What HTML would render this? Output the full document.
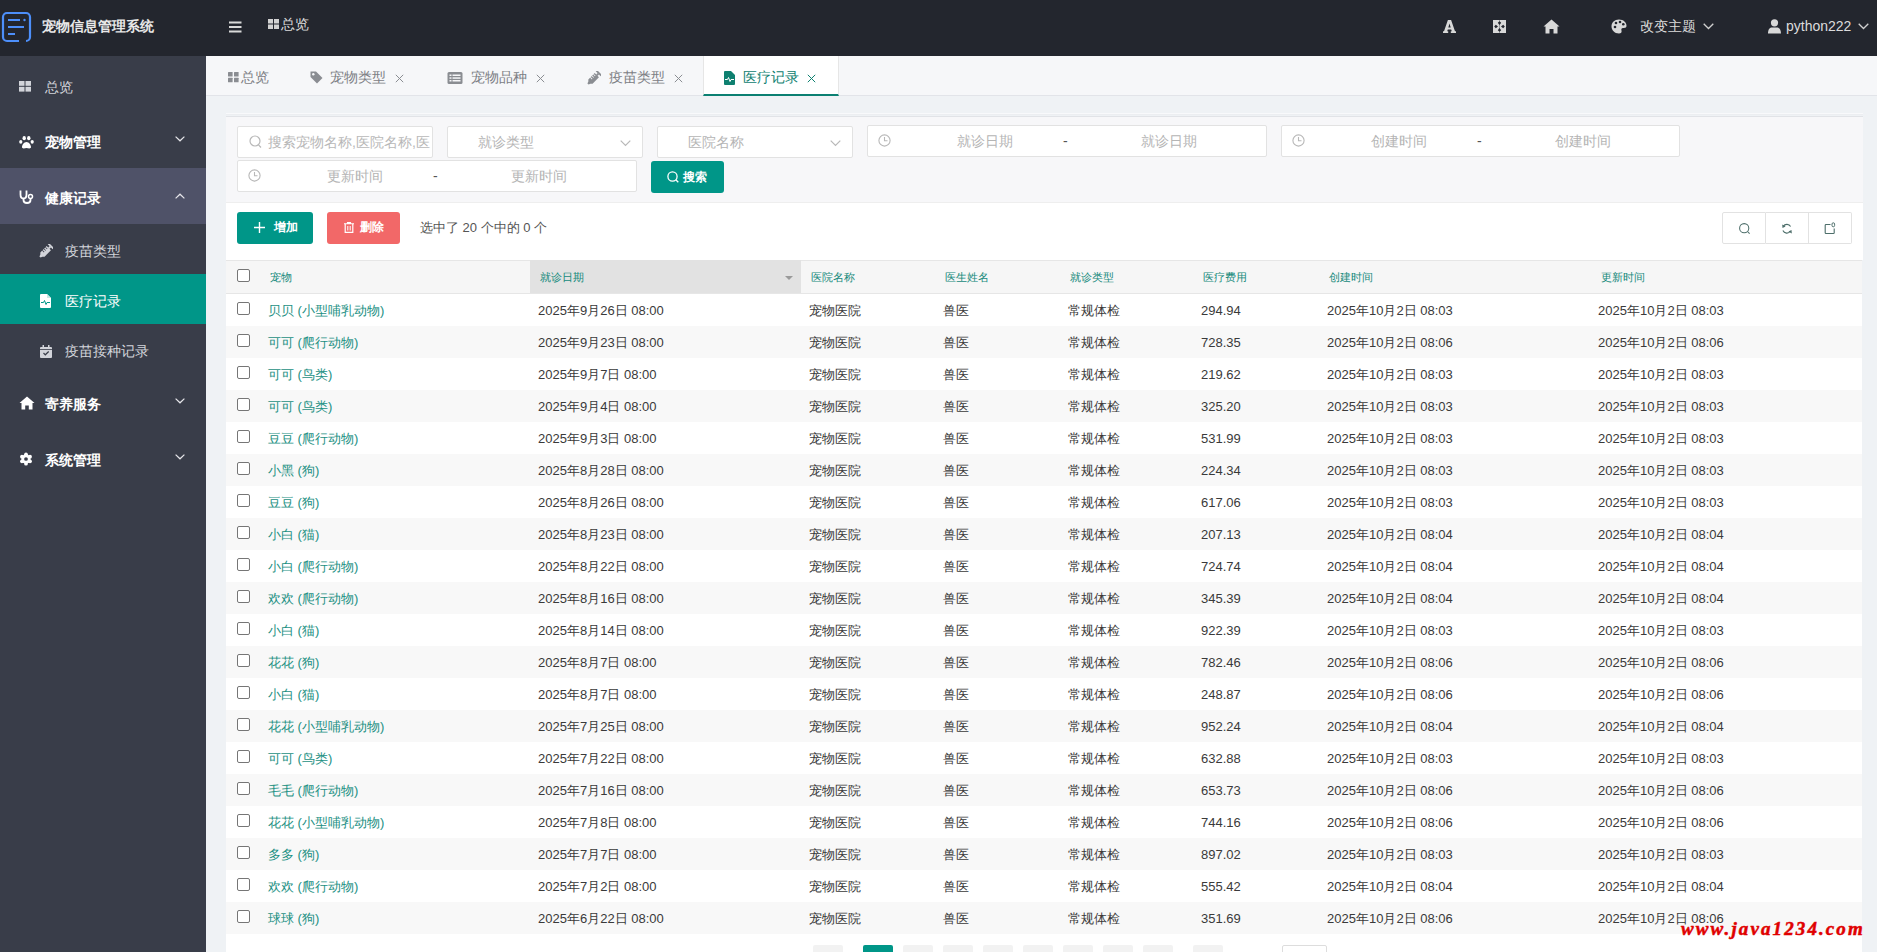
<!DOCTYPE html>
<html><head><meta charset="utf-8">
<style>
*{box-sizing:border-box;margin:0;padding:0}
html,body{width:1877px;height:952px;overflow:hidden}
body{font-family:"Liberation Sans",sans-serif;background:#eff2f5;position:relative;color:#333}
.abs{position:absolute}
svg{display:block}
#hdr{position:absolute;left:0;top:0;width:1877px;height:56px;background:#23262e}
#side{position:absolute;left:0;top:56px;width:206px;height:896px;background:#393d49}
.mi{position:absolute;left:0;width:206px;color:#fff;font-size:14px;font-weight:bold}
.mi .t{position:absolute;left:45px}
.mi .ic{position:absolute}
.sub{position:absolute;left:0;width:206px;height:50px;color:#d2d4da;font-size:14px}
.sub .t{position:absolute;left:65px;top:19px}
#tabs{position:absolute;left:206px;top:56px;width:1671px;height:40px;background:#f6f7f9;border-bottom:1px solid #e2e4e9}
.tab{position:absolute;top:0;height:39px;color:#7d8085;font-size:14px}
.tab .t{position:absolute;top:13px}
#panel{position:absolute;left:226px;top:116px;width:1637px;height:86px;background:#f7f7f9;border-top:1px solid #e1e3e7}
.inp{position:absolute;height:32px;background:#fff;border:1px solid #e2e2e2;border-radius:2px;color:#b5b5b5;font-size:14px}
.inp .t{position:absolute;top:7px}
#tool{position:absolute;left:226px;top:202px;width:1637px;height:58px;background:#fff;border-top:1px solid #eee}
#thead{position:absolute;left:226px;top:260px;width:1636px;height:34px;background:#f6f6f6;border-top:1px solid #e6e6e6;border-bottom:1px solid #e6e6e6}
.th{position:absolute;top:9px;font-size:11px;color:#168a7c}
.tr{position:absolute;left:226px;width:1636px;height:32px}
.td{position:absolute;top:8px;font-size:13px;line-height:17px;color:#3a3a3a;white-space:nowrap}
.pet{color:#1c9083}
.cb{position:absolute;width:13px;height:13px;border:1px solid #767676;border-radius:2px;background:#fff}
.btn{position:absolute;height:32px;border-radius:3px;color:#fff;font-size:12px;font-weight:bold}
.tb{position:absolute;top:10px;width:43px;height:32px;border:1px solid #e2e2e2;background:#fff}
.pg{position:absolute;top:945px;width:30px;height:10px;background:#f2f2f2;border-radius:2px}
</style></head><body>

<!-- HEADER -->
<div id="hdr">
  <svg class="abs" style="left:1px;top:11px" width="31" height="32" viewBox="0 0 31 32">
    <rect x="2" y="2" width="27" height="28" rx="4" fill="none" stroke="#4d8ffa" stroke-width="2.2"/>
    <rect x="7" y="8" width="12" height="2" fill="#4d8ffa"/>
    <circle cx="23.5" cy="9" r="1.2" fill="#4d8ffa"/>
    <rect x="7" y="15" width="16" height="2" fill="#4d8ffa"/>
    <rect x="7" y="22" width="7" height="2" fill="#4d8ffa"/>
    <rect x="18" y="28" width="7" height="4" fill="#23262e"/>
  </svg>
  <div class="abs" style="left:42px;top:18px;font-size:14px;font-weight:bold;color:#e8e8e8">宠物信息管理系统</div>
  <svg class="abs" style="left:229px;top:21px" width="13" height="12" viewBox="0 0 13 12">
    <rect x="0" y="0.5" width="12.5" height="2" fill="#d9d9d9"/><rect x="0" y="5" width="12.5" height="2" fill="#d9d9d9"/><rect x="0" y="9.5" width="12.5" height="2" fill="#d9d9d9"/>
  </svg>
  <svg class="abs" style="left:268px;top:19px" width="12" height="11" viewBox="0 0 12 11">
    <rect x="0" y="0" width="5" height="4.5" fill="#d2d2d2"/><rect x="6" y="0" width="5" height="4.5" fill="#d2d2d2"/>
    <rect x="0" y="5.5" width="5" height="4.5" fill="#d2d2d2"/><rect x="6" y="5.5" width="5" height="4.5" fill="#d2d2d2"/>
  </svg>
  <div class="abs" style="left:281px;top:16px;font-size:14px;color:#dcdcdc">总览</div>

  <svg class="abs" style="left:1443px;top:20px" width="13" height="13" viewBox="0 0 13 13"><path fill-rule="evenodd" d="M0 13 V11.3 H1 L4.9 0 H8.1 L12 11.3 H13 V13 H7.8 V11.3 H8.8 L8.2 9.4 H4.8 L4.2 11.3 H5.2 V13 Z M5.3 7.4 H7.7 L6.5 3.6 Z" fill="#d8d8d8"/></svg>
  <svg class="abs" style="left:1493px;top:20px" width="13" height="13" viewBox="0 0 13 13">
    <rect x="0" y="0" width="13" height="13" fill="#d8d8d8"/>
    <path d="M6.5 5 L8.2 2.8 L6.5 1.2 L4.8 2.8 Z M6.5 8 L8.2 10.2 L6.5 11.8 L4.8 10.2 Z M5 6.5 L2.8 8.2 L1.2 6.5 L2.8 4.8 Z M8 6.5 L10.2 8.2 L11.8 6.5 L10.2 4.8 Z" fill="#23262e"/>
    <path d="M6.5 0 V13" stroke="#23262e" stroke-width="0.35"/>
  </svg>
  <svg class="abs" style="left:1543px;top:19px" width="17" height="15" viewBox="0 0 17 15">
    <path d="M8.5 0.5 L16.5 7.5 L14.5 7.5 L14.5 14.5 L10.5 14.5 L10.5 10 L6.5 10 L6.5 14.5 L2.5 14.5 L2.5 7.5 L0.5 7.5 Z" fill="#d8d8d8"/>
  </svg>
  <svg class="abs" style="left:1611px;top:19px" width="16" height="15" viewBox="0 0 16 15">
    <path d="M8 0.5 C12.5 0.5 15.5 3.5 15.5 6.8 C15.5 9 13.5 9 12 9 C10.5 9 10 10 10.5 11.5 C11 13.5 10 14.5 8 14.5 C3.5 14.5 0.5 11 0.5 7.5 C0.5 3.5 3.5 0.5 8 0.5 Z" fill="#d8d8d8"/>
    <circle cx="4" cy="8" r="1.3" fill="#23262e"/><circle cx="5" cy="4" r="1.3" fill="#23262e"/><circle cx="9" cy="3" r="1.3" fill="#23262e"/><circle cx="12.3" cy="5.2" r="1.3" fill="#23262e"/>
  </svg>
  <div class="abs" style="left:1640px;top:18px;font-size:14px;color:#dcdcdc">改变主题</div>
  <svg class="abs" style="left:1703px;top:23px" width="11" height="7" viewBox="0 0 11 7"><path d="M0.7 0.7 L5.5 5.5 L10.3 0.7" fill="none" stroke="#d0d0d0" stroke-width="1.3"/></svg>
  <svg class="abs" style="left:1768px;top:19px" width="13" height="15" viewBox="0 0 13 15">
    <circle cx="6.5" cy="3.8" r="3.6" fill="#d8d8d8"/>
    <path d="M0 14.5 C0 10 2 8.5 4 8.5 L9 8.5 C11 8.5 13 10 13 14.5 Z" fill="#d8d8d8"/>
  </svg>
  <div class="abs" style="left:1786px;top:18px;font-size:14px;color:#dcdcdc">python222</div>
  <svg class="abs" style="left:1858px;top:23px" width="11" height="7" viewBox="0 0 11 7"><path d="M0.7 0.7 L5.5 5.5 L10.3 0.7" fill="none" stroke="#d0d0d0" stroke-width="1.3"/></svg>
</div>

<!-- SIDEBAR -->
<div id="side">
  <div class="mi" style="top:0;height:56px;font-weight:normal;color:#d2d4da">
    <svg class="ic" style="left:19px;top:25px" width="13" height="11" viewBox="0 0 13 11">
      <rect x="0" y="0" width="5.5" height="4.8" fill="#d2d4da"/><rect x="6.5" y="0" width="5.5" height="4.8" fill="#d2d4da"/>
      <rect x="0" y="5.8" width="5.5" height="4.8" fill="#d2d4da"/><rect x="6.5" y="5.8" width="5.5" height="4.8" fill="#d2d4da"/>
    </svg>
    <span class="t" style="top:23px">总览</span>
  </div>
  <div class="mi" style="top:56px;height:56px">
    <svg class="ic" style="left:19px;top:24px" width="15" height="13" viewBox="0 0 15 13">
      <ellipse cx="5.2" cy="2.2" rx="1.7" ry="2.1" fill="#fff"/><ellipse cx="9.8" cy="2.2" rx="1.7" ry="2.1" fill="#fff"/>
      <ellipse cx="1.8" cy="5.8" rx="1.6" ry="1.9" fill="#fff"/><ellipse cx="13.2" cy="5.8" rx="1.6" ry="1.9" fill="#fff"/>
      <path d="M7.5 6 C5 6 3 9 3 11 C3 12.8 5 12.5 7.5 12 C10 12.5 12 12.8 12 11 C12 9 10 6 7.5 6 Z" fill="#fff"/>
    </svg>
    <span class="t" style="top:22px">宠物管理</span>
    <svg class="ic" style="left:175px;top:23.5px" width="10" height="6" viewBox="0 0 10 6"><path d="M0.6 0.6 L5 4.8 L9.4 0.6" fill="none" stroke="#e6e6ea" stroke-width="1.2"/></svg>
  </div>
  <div class="mi" style="top:112px;height:56px;background:#4f5268">
    <svg class="ic" style="left:19px;top:22px" width="15" height="14" viewBox="0 0 15 14">
      <path d="M1.5 0.5 V4.5 C1.5 7 3 8.5 4.5 8.5 C6 8.5 7.5 7 7.5 4.5 V0.5" fill="none" stroke="#fff" stroke-width="1.8"/>
      <path d="M4.5 8.5 V10 C4.5 12 6 13 8 13 C10 13 11.5 12 11.5 10 V8" fill="none" stroke="#fff" stroke-width="1.8"/>
      <circle cx="11.5" cy="6.5" r="2" fill="none" stroke="#fff" stroke-width="1.5"/>
    </svg>
    <span class="t" style="top:22px">健康记录</span>
    <svg class="ic" style="left:175px;top:25px" width="10" height="6" viewBox="0 0 10 6"><path d="M0.6 5.4 L5 1.2 L9.4 5.4" fill="none" stroke="#e6e6ea" stroke-width="1.2"/></svg>
  </div>
  <div class="sub" style="top:168px">
    <svg class="abs" style="left:39px;top:20px" width="14" height="14" viewBox="0 0 14 14">
    <g transform="translate(7,7) rotate(-45)">
      <path d="M-5 -3 L4 -3 L4 3 L-5 3 L-6.5 1.5 L-8.5 0.8 L-8.5 -0.8 L-6.5 -1.5 Z" fill="#d2d4da"/>
      <rect x="4" y="-1" width="2.2" height="2" fill="#d2d4da"/>
      <rect x="6" y="-3.5" width="1.8" height="7" fill="#d2d4da"/>
      <rect x="-2.5" y="-3.1" width="0.8" height="2.6" fill="#393d49"/><rect x="-0.3" y="-3.1" width="0.8" height="2.6" fill="#393d49"/><rect x="1.9" y="-3.1" width="0.8" height="2.6" fill="#393d49"/>
    </g>
    </svg>
    <span class="t">疫苗类型</span>
  </div>
  <div class="sub" style="top:218px;background:#009688;color:#fff">
    <svg class="abs" style="left:40px;top:20px" width="11" height="14" viewBox="0 0 11 14">
      <path d="M0 1 Q0 0 1 0 L7 0 L11 4 L11 13 Q11 14 10 14 L1 14 Q0 14 0 13 Z" fill="#fff"/>
      <path d="M7 0 L7 4 L11 4" fill="#c8e8e4"/>
      <path d="M1 8.5 L3.5 8.5 L4.5 6.5 L6 10.5 L7 8.5 L10 8.5" fill="none" stroke="#009688" stroke-width="1"/>
    </svg>
    <span class="t">医疗记录</span>
  </div>
  <div class="sub" style="top:268px">
    <svg class="abs" style="left:40px;top:21px" width="12" height="13" viewBox="0 0 12 13">
      <rect x="0" y="2" width="12" height="11" rx="1" fill="#d2d4da"/>
      <rect x="2.5" y="0" width="1.5" height="3" fill="#d2d4da"/><rect x="8" y="0" width="1.5" height="3" fill="#d2d4da"/>
      <rect x="0" y="4" width="12" height="0.8" fill="#393d49"/>
      <path d="M3.5 8 L5.3 9.8 L8.7 6.5" fill="none" stroke="#393d49" stroke-width="1.2"/>
    </svg>
    <span class="t">疫苗接种记录</span>
  </div>
  <div class="mi" style="top:318px;height:56px">
    <svg class="ic" style="left:19px;top:22px" width="16" height="14" viewBox="0 0 16 14">
      <path d="M8 0.5 L15.5 7 L13.5 7 L13.5 13.5 L9.8 13.5 L9.8 9.5 L6.2 9.5 L6.2 13.5 L2.5 13.5 L2.5 7 L0.5 7 Z" fill="#fff"/>
    </svg>
    <span class="t" style="top:22px">寄养服务</span>
    <svg class="ic" style="left:175px;top:23.5px" width="10" height="6" viewBox="0 0 10 6"><path d="M0.6 0.6 L5 4.8 L9.4 0.6" fill="none" stroke="#e6e6ea" stroke-width="1.2"/></svg>
  </div>
  <div class="mi" style="top:374px;height:56px">
    <svg class="ic" style="left:19px;top:22px" width="14" height="14" viewBox="-0.5 -0.5 15 15">
      <circle cx="7" cy="7" r="5" fill="#fff"/><circle cx="7.00" cy="2.00" r="2" fill="#fff"/><circle cx="11.33" cy="4.50" r="2" fill="#fff"/><circle cx="11.33" cy="9.50" r="2" fill="#fff"/><circle cx="7.00" cy="12.00" r="2" fill="#fff"/><circle cx="2.67" cy="9.50" r="2" fill="#fff"/><circle cx="2.67" cy="4.50" r="2" fill="#fff"/><circle cx="7" cy="7" r="2" fill="#393d49"/>
    </svg>
    <span class="t" style="top:22px">系统管理</span>
    <svg class="ic" style="left:175px;top:23.5px" width="10" height="6" viewBox="0 0 10 6"><path d="M0.6 0.6 L5 4.8 L9.4 0.6" fill="none" stroke="#e6e6ea" stroke-width="1.2"/></svg>
  </div>
</div>

<!-- TABS -->
<div id="tabs">
  <div class="tab" style="left:0;width:80px">
    <svg class="abs" style="left:22px;top:16px" width="12" height="11" viewBox="0 0 12 11">
      <rect x="0" y="0" width="4.6" height="4.4" rx="0.5" fill="#8a8d92"/><rect x="6" y="0" width="4.6" height="4.4" rx="0.5" fill="#8a8d92"/>
      <rect x="0" y="5.8" width="4.6" height="4.4" rx="0.5" fill="#8a8d92"/><rect x="6" y="5.8" width="4.6" height="4.4" rx="0.5" fill="#8a8d92"/>
    </svg>
    <span class="t" style="left:35px">总览</span>
  </div>
  <div class="tab" style="left:83px;width:140px">
    <svg class="abs" style="left:21px;top:15px" width="13" height="13" viewBox="0 0 13 13">
      <path d="M0.5 0.5 L6 0.5 L12.5 7 L7 12.5 L0.5 6 Z" fill="#8a8d92"/><circle cx="3.3" cy="3.3" r="1.2" fill="#f6f7f9"/>
    </svg>
    <span class="t" style="left:41px">宠物类型</span>
    <svg class="abs" style="left:106px;top:18px" width="9" height="9" viewBox="0 0 9 9"><path d="M0.8 0.8 L8.2 8.2 M8.2 0.8 L0.8 8.2" stroke="#8a8d92" stroke-width="1"/></svg>
  </div>
  <div class="tab" style="left:223px;width:140px">
    <svg class="abs" style="left:18px;top:16px" width="16" height="12" viewBox="0 0 15 12">
      <rect x="0" y="0" width="15" height="12" rx="1.5" fill="#8a8d92"/>
      <rect x="2" y="2.5" width="2" height="1.5" fill="#f6f7f9"/><rect x="5" y="2.5" width="8" height="1.5" fill="#f6f7f9"/>
      <rect x="2" y="5.3" width="2" height="1.5" fill="#f6f7f9"/><rect x="5" y="5.3" width="8" height="1.5" fill="#f6f7f9"/>
      <rect x="2" y="8" width="2" height="1.5" fill="#f6f7f9"/><rect x="5" y="8" width="8" height="1.5" fill="#f6f7f9"/>
    </svg>
    <span class="t" style="left:42px">宠物品种</span>
    <svg class="abs" style="left:107px;top:18px" width="9" height="9" viewBox="0 0 9 9"><path d="M0.8 0.8 L8.2 8.2 M8.2 0.8 L0.8 8.2" stroke="#8a8d92" stroke-width="1"/></svg>
  </div>
  <div class="tab" style="left:363px;width:134px">
    <svg class="abs" style="left:18px;top:15px" width="14" height="14" viewBox="0 0 14 14">
    <g transform="translate(7,7) rotate(-45)">
      <path d="M-5 -3 L4 -3 L4 3 L-5 3 L-6.5 1.5 L-8.5 0.8 L-8.5 -0.8 L-6.5 -1.5 Z" fill="#8a8d92"/>
      <rect x="4" y="-1" width="2.2" height="2" fill="#8a8d92"/>
      <rect x="6" y="-3.5" width="1.8" height="7" fill="#8a8d92"/>
      <rect x="-2.5" y="-3.1" width="0.8" height="2.6" fill="#f6f7f9"/><rect x="-0.3" y="-3.1" width="0.8" height="2.6" fill="#f6f7f9"/><rect x="1.9" y="-3.1" width="0.8" height="2.6" fill="#f6f7f9"/>
    </g>
    </svg>
    <span class="t" style="left:40px">疫苗类型</span>
    <svg class="abs" style="left:105px;top:18px" width="9" height="9" viewBox="0 0 9 9"><path d="M0.8 0.8 L8.2 8.2 M8.2 0.8 L0.8 8.2" stroke="#8a8d92" stroke-width="1"/></svg>
  </div>
  <div class="tab" style="left:497px;width:136px;background:#fff;height:40px;border-bottom:2px solid #0b8072;border-left:1px solid #e6e6e6;border-right:1px solid #e6e6e6;color:#0e8070">
    <svg class="abs" style="left:20px;top:15px" width="11" height="14" viewBox="0 0 11 14">
      <path d="M0 1 Q0 0 1 0 L7 0 L11 4 L11 13 Q11 14 10 14 L1 14 Q0 14 0 13 Z" fill="#0e8070"/>
      <path d="M1 8.5 L3.5 8.5 L4.5 6.5 L6 10.5 L7 8.5 L10 8.5" fill="none" stroke="#fff" stroke-width="1"/>
    </svg>
    <span class="t" style="left:39px">医疗记录</span>
    <svg class="abs" style="left:103px;top:18px" width="9" height="9" viewBox="0 0 9 9"><path d="M0.8 0.8 L8.2 8.2 M8.2 0.8 L0.8 8.2" stroke="#0e8070" stroke-width="1"/></svg>
  </div>
</div>

<!-- SEARCH PANEL -->
<div class="abs" style="left:226px;top:113px;width:1637px;height:1px;background:#f8f9fb"></div><div class="abs" style="left:226px;top:114px;width:1637px;height:1px;background:#eceef1"></div>
<div id="panel"></div>
<div class="inp" style="left:237px;top:126px;width:196px">
  <svg class="abs" style="left:11px;top:8px" width="13" height="14" viewBox="0 0 13 14"><circle cx="6" cy="6" r="5" fill="none" stroke="#b8b8b8" stroke-width="1.2"/><path d="M9.5 9.8 L12 12.5" stroke="#b8b8b8" stroke-width="1.2"/></svg>
  <span class="t" style="left:30px;color:#b8b8b8;white-space:nowrap;overflow:hidden;width:164px">搜索宠物名称,医院名称,医</span>
</div>
<div class="inp" style="left:447px;top:126px;width:196px">
  <span class="t" style="left:30px">就诊类型</span>
  <svg class="abs" style="left:172px;top:13px" width="11" height="7" viewBox="0 0 11 7"><path d="M0.7 0.7 L5.5 5.5 L10.3 0.7" fill="none" stroke="#b8b8b8" stroke-width="1.2"/></svg>
</div>
<div class="inp" style="left:657px;top:126px;width:196px">
  <span class="t" style="left:30px">医院名称</span>
  <svg class="abs" style="left:172px;top:13px" width="11" height="7" viewBox="0 0 11 7"><path d="M0.7 0.7 L5.5 5.5 L10.3 0.7" fill="none" stroke="#b8b8b8" stroke-width="1.2"/></svg>
</div>
<div class="inp" style="left:867px;top:125px;width:400px">
  <svg class="abs" style="left:10px;top:8px" width="13" height="13" viewBox="0 0 13 13"><circle cx="6.5" cy="6.5" r="5.6" fill="none" stroke="#b8b8b8" stroke-width="1.1"/><path d="M6.5 3 V6.8 H9.5" fill="none" stroke="#b8b8b8" stroke-width="1.1"/></svg>
  <span class="t" style="left:89px">就诊日期</span>
  <span class="t" style="left:195px;color:#555">-</span>
  <span class="t" style="left:273px">就诊日期</span>
</div>
<div class="inp" style="left:1281px;top:125px;width:399px">
  <svg class="abs" style="left:10px;top:8px" width="13" height="13" viewBox="0 0 13 13"><circle cx="6.5" cy="6.5" r="5.6" fill="none" stroke="#b8b8b8" stroke-width="1.1"/><path d="M6.5 3 V6.8 H9.5" fill="none" stroke="#b8b8b8" stroke-width="1.1"/></svg>
  <span class="t" style="left:89px">创建时间</span>
  <span class="t" style="left:195px;color:#555">-</span>
  <span class="t" style="left:273px">创建时间</span>
</div>
<div class="inp" style="left:237px;top:160px;width:400px">
  <svg class="abs" style="left:10px;top:8px" width="13" height="13" viewBox="0 0 13 13"><circle cx="6.5" cy="6.5" r="5.6" fill="none" stroke="#b8b8b8" stroke-width="1.1"/><path d="M6.5 3 V6.8 H9.5" fill="none" stroke="#b8b8b8" stroke-width="1.1"/></svg>
  <span class="t" style="left:89px">更新时间</span>
  <span class="t" style="left:195px;color:#555">-</span>
  <span class="t" style="left:273px">更新时间</span>
</div>
<div class="btn" style="left:651px;top:161px;width:73px;height:32px;background:#009688">
  <svg class="abs" style="left:16px;top:10px" width="12" height="12" viewBox="0 0 12 12"><circle cx="5.5" cy="5.5" r="4.6" fill="none" stroke="#fff" stroke-width="1.3"/><path d="M8.8 8.8 L11.3 11.3" stroke="#fff" stroke-width="1.3"/></svg>
  <span class="abs" style="left:32px;top:8px">搜索</span>
</div>

<!-- TOOLBAR -->
<div id="tool"></div>
<div class="btn" style="left:237px;top:212px;width:76px;background:#009688">
  <svg class="abs" style="left:17px;top:10px" width="11" height="11" viewBox="0 0 11 11"><path d="M5.5 0 V11 M0 5.5 H11" stroke="#fff" stroke-width="1.4"/></svg>
  <span class="abs" style="left:37px;top:7px">增加</span>
</div>
<div class="btn" style="left:327px;top:212px;width:73px;background:#f26868">
  <svg class="abs" style="left:17px;top:10px" width="10" height="11" viewBox="0 0 10 11"><path d="M0 1.8 H10 M3.5 1.8 V0.6 H6.5 V1.8" fill="none" stroke="#fff" stroke-width="1.1"/><path d="M1.2 2 V10.4 H8.8 V2" fill="none" stroke="#fff" stroke-width="1.2"/><path d="M3.8 4 V8.5 M6.2 4 V8.5" stroke="#fff" stroke-width="1"/></svg>
  <span class="abs" style="left:33px;top:7px">删除</span>
</div>
<div class="abs" style="left:420px;top:219px;font-size:13px;color:#555">选中了 20 个中的 0 个</div>
<div class="tb" style="left:1722px;top:212px;width:44px;border-radius:2px 0 0 2px">
  <svg class="abs" style="left:15px;top:9px" width="13" height="13" viewBox="0 0 13 13"><circle cx="6.2" cy="6.2" r="4.6" fill="none" stroke="#4d6e6a" stroke-width="1.05"/><path d="M9.5 9.5 L11.6 11.6" stroke="#4d6e6a" stroke-width="1.05"/></svg>
</div>
<div class="tb" style="left:1766px;top:212px;border-left:none">
  <svg class="abs" style="left:15px;top:10px" width="12" height="12" viewBox="0 0 12 12"><path d="M9.6 3.6 A4.3 4.3 0 0 0 2.3 3.2" fill="none" stroke="#4d6e6a" stroke-width="1.1"/><path d="M1.9 7.6 A4.3 4.3 0 0 0 9.3 8.3" fill="none" stroke="#4d6e6a" stroke-width="1.1"/><path d="M1.2 1.6 L1.5 5 L4.6 3.6 Z M10.8 10.4 L10.5 7 L7.4 8.4 Z" fill="#4d6e6a"/></svg>
</div>
<div class="tb" style="left:1809px;top:212px;border-left:none;border-radius:0 2px 2px 0">
  <svg class="abs" style="left:15px;top:9px" width="13" height="13" viewBox="0 0 13 13"><path d="M6.5 2.5 H2 Q1.2 2.5 1.2 3.3 V10.7 Q1.2 11.5 2 11.5 H9.4 Q10.2 11.5 10.2 10.7 V6.5" fill="none" stroke="#4d6e6a" stroke-width="1.1"/><rect x="8" y="0.8" width="2.6" height="4" rx="1.3" fill="none" stroke="#4d6e6a" stroke-width="1"/></svg>
</div>

<!-- TABLE HEADER -->
<div id="thead">
  <span class="cb" style="left:11px;top:8px"></span>
  <div class="abs" style="left:304px;top:-1px;width:271px;height:33px;background:#e2e2e2"></div>
  <span class="th" style="left:44px">宠物</span>
  <span class="th" style="left:314px">就诊日期</span>
  <svg class="abs" style="left:559px;top:15px" width="8" height="4" viewBox="0 0 8 4"><path d="M0 0 H8 L4 4 Z" fill="#9a9a9a"/></svg>
  <span class="th" style="left:585px">医院名称</span>
  <span class="th" style="left:719px">医生姓名</span>
  <span class="th" style="left:844px">就诊类型</span>
  <span class="th" style="left:977px">医疗费用</span>
  <span class="th" style="left:1103px">创建时间</span>
  <span class="th" style="left:1375px">更新时间</span>
</div>

<!-- ROWS -->
<div class="tr" style="top:294px;background:#fff"><span class="cb" style="left:11px;top:8px"></span><span class="td pet" style="left:42px">贝贝 (小型哺乳动物)</span><span class="td" style="left:312px">2025年9月26日 08:00</span><span class="td" style="left:583px">宠物医院</span><span class="td" style="left:717px">兽医</span><span class="td" style="left:842px">常规体检</span><span class="td" style="left:975px">294.94</span><span class="td" style="left:1101px">2025年10月2日 08:03</span><span class="td" style="left:1372px">2025年10月2日 08:03</span></div>
<div class="tr" style="top:326px;background:#f8f8f8"><span class="cb" style="left:11px;top:8px"></span><span class="td pet" style="left:42px">可可 (爬行动物)</span><span class="td" style="left:312px">2025年9月23日 08:00</span><span class="td" style="left:583px">宠物医院</span><span class="td" style="left:717px">兽医</span><span class="td" style="left:842px">常规体检</span><span class="td" style="left:975px">728.35</span><span class="td" style="left:1101px">2025年10月2日 08:06</span><span class="td" style="left:1372px">2025年10月2日 08:06</span></div>
<div class="tr" style="top:358px;background:#fff"><span class="cb" style="left:11px;top:8px"></span><span class="td pet" style="left:42px">可可 (鸟类)</span><span class="td" style="left:312px">2025年9月7日 08:00</span><span class="td" style="left:583px">宠物医院</span><span class="td" style="left:717px">兽医</span><span class="td" style="left:842px">常规体检</span><span class="td" style="left:975px">219.62</span><span class="td" style="left:1101px">2025年10月2日 08:03</span><span class="td" style="left:1372px">2025年10月2日 08:03</span></div>
<div class="tr" style="top:390px;background:#f8f8f8"><span class="cb" style="left:11px;top:8px"></span><span class="td pet" style="left:42px">可可 (鸟类)</span><span class="td" style="left:312px">2025年9月4日 08:00</span><span class="td" style="left:583px">宠物医院</span><span class="td" style="left:717px">兽医</span><span class="td" style="left:842px">常规体检</span><span class="td" style="left:975px">325.20</span><span class="td" style="left:1101px">2025年10月2日 08:03</span><span class="td" style="left:1372px">2025年10月2日 08:03</span></div>
<div class="tr" style="top:422px;background:#fff"><span class="cb" style="left:11px;top:8px"></span><span class="td pet" style="left:42px">豆豆 (爬行动物)</span><span class="td" style="left:312px">2025年9月3日 08:00</span><span class="td" style="left:583px">宠物医院</span><span class="td" style="left:717px">兽医</span><span class="td" style="left:842px">常规体检</span><span class="td" style="left:975px">531.99</span><span class="td" style="left:1101px">2025年10月2日 08:03</span><span class="td" style="left:1372px">2025年10月2日 08:03</span></div>
<div class="tr" style="top:454px;background:#f8f8f8"><span class="cb" style="left:11px;top:8px"></span><span class="td pet" style="left:42px">小黑 (狗)</span><span class="td" style="left:312px">2025年8月28日 08:00</span><span class="td" style="left:583px">宠物医院</span><span class="td" style="left:717px">兽医</span><span class="td" style="left:842px">常规体检</span><span class="td" style="left:975px">224.34</span><span class="td" style="left:1101px">2025年10月2日 08:03</span><span class="td" style="left:1372px">2025年10月2日 08:03</span></div>
<div class="tr" style="top:486px;background:#fff"><span class="cb" style="left:11px;top:8px"></span><span class="td pet" style="left:42px">豆豆 (狗)</span><span class="td" style="left:312px">2025年8月26日 08:00</span><span class="td" style="left:583px">宠物医院</span><span class="td" style="left:717px">兽医</span><span class="td" style="left:842px">常规体检</span><span class="td" style="left:975px">617.06</span><span class="td" style="left:1101px">2025年10月2日 08:03</span><span class="td" style="left:1372px">2025年10月2日 08:03</span></div>
<div class="tr" style="top:518px;background:#f8f8f8"><span class="cb" style="left:11px;top:8px"></span><span class="td pet" style="left:42px">小白 (猫)</span><span class="td" style="left:312px">2025年8月23日 08:00</span><span class="td" style="left:583px">宠物医院</span><span class="td" style="left:717px">兽医</span><span class="td" style="left:842px">常规体检</span><span class="td" style="left:975px">207.13</span><span class="td" style="left:1101px">2025年10月2日 08:04</span><span class="td" style="left:1372px">2025年10月2日 08:04</span></div>
<div class="tr" style="top:550px;background:#fff"><span class="cb" style="left:11px;top:8px"></span><span class="td pet" style="left:42px">小白 (爬行动物)</span><span class="td" style="left:312px">2025年8月22日 08:00</span><span class="td" style="left:583px">宠物医院</span><span class="td" style="left:717px">兽医</span><span class="td" style="left:842px">常规体检</span><span class="td" style="left:975px">724.74</span><span class="td" style="left:1101px">2025年10月2日 08:04</span><span class="td" style="left:1372px">2025年10月2日 08:04</span></div>
<div class="tr" style="top:582px;background:#f8f8f8"><span class="cb" style="left:11px;top:8px"></span><span class="td pet" style="left:42px">欢欢 (爬行动物)</span><span class="td" style="left:312px">2025年8月16日 08:00</span><span class="td" style="left:583px">宠物医院</span><span class="td" style="left:717px">兽医</span><span class="td" style="left:842px">常规体检</span><span class="td" style="left:975px">345.39</span><span class="td" style="left:1101px">2025年10月2日 08:04</span><span class="td" style="left:1372px">2025年10月2日 08:04</span></div>
<div class="tr" style="top:614px;background:#fff"><span class="cb" style="left:11px;top:8px"></span><span class="td pet" style="left:42px">小白 (猫)</span><span class="td" style="left:312px">2025年8月14日 08:00</span><span class="td" style="left:583px">宠物医院</span><span class="td" style="left:717px">兽医</span><span class="td" style="left:842px">常规体检</span><span class="td" style="left:975px">922.39</span><span class="td" style="left:1101px">2025年10月2日 08:03</span><span class="td" style="left:1372px">2025年10月2日 08:03</span></div>
<div class="tr" style="top:646px;background:#f8f8f8"><span class="cb" style="left:11px;top:8px"></span><span class="td pet" style="left:42px">花花 (狗)</span><span class="td" style="left:312px">2025年8月7日 08:00</span><span class="td" style="left:583px">宠物医院</span><span class="td" style="left:717px">兽医</span><span class="td" style="left:842px">常规体检</span><span class="td" style="left:975px">782.46</span><span class="td" style="left:1101px">2025年10月2日 08:06</span><span class="td" style="left:1372px">2025年10月2日 08:06</span></div>
<div class="tr" style="top:678px;background:#fff"><span class="cb" style="left:11px;top:8px"></span><span class="td pet" style="left:42px">小白 (猫)</span><span class="td" style="left:312px">2025年8月7日 08:00</span><span class="td" style="left:583px">宠物医院</span><span class="td" style="left:717px">兽医</span><span class="td" style="left:842px">常规体检</span><span class="td" style="left:975px">248.87</span><span class="td" style="left:1101px">2025年10月2日 08:06</span><span class="td" style="left:1372px">2025年10月2日 08:06</span></div>
<div class="tr" style="top:710px;background:#f8f8f8"><span class="cb" style="left:11px;top:8px"></span><span class="td pet" style="left:42px">花花 (小型哺乳动物)</span><span class="td" style="left:312px">2025年7月25日 08:00</span><span class="td" style="left:583px">宠物医院</span><span class="td" style="left:717px">兽医</span><span class="td" style="left:842px">常规体检</span><span class="td" style="left:975px">952.24</span><span class="td" style="left:1101px">2025年10月2日 08:04</span><span class="td" style="left:1372px">2025年10月2日 08:04</span></div>
<div class="tr" style="top:742px;background:#fff"><span class="cb" style="left:11px;top:8px"></span><span class="td pet" style="left:42px">可可 (鸟类)</span><span class="td" style="left:312px">2025年7月22日 08:00</span><span class="td" style="left:583px">宠物医院</span><span class="td" style="left:717px">兽医</span><span class="td" style="left:842px">常规体检</span><span class="td" style="left:975px">632.88</span><span class="td" style="left:1101px">2025年10月2日 08:03</span><span class="td" style="left:1372px">2025年10月2日 08:03</span></div>
<div class="tr" style="top:774px;background:#f8f8f8"><span class="cb" style="left:11px;top:8px"></span><span class="td pet" style="left:42px">毛毛 (爬行动物)</span><span class="td" style="left:312px">2025年7月16日 08:00</span><span class="td" style="left:583px">宠物医院</span><span class="td" style="left:717px">兽医</span><span class="td" style="left:842px">常规体检</span><span class="td" style="left:975px">653.73</span><span class="td" style="left:1101px">2025年10月2日 08:06</span><span class="td" style="left:1372px">2025年10月2日 08:06</span></div>
<div class="tr" style="top:806px;background:#fff"><span class="cb" style="left:11px;top:8px"></span><span class="td pet" style="left:42px">花花 (小型哺乳动物)</span><span class="td" style="left:312px">2025年7月8日 08:00</span><span class="td" style="left:583px">宠物医院</span><span class="td" style="left:717px">兽医</span><span class="td" style="left:842px">常规体检</span><span class="td" style="left:975px">744.16</span><span class="td" style="left:1101px">2025年10月2日 08:06</span><span class="td" style="left:1372px">2025年10月2日 08:06</span></div>
<div class="tr" style="top:838px;background:#f8f8f8"><span class="cb" style="left:11px;top:8px"></span><span class="td pet" style="left:42px">多多 (狗)</span><span class="td" style="left:312px">2025年7月7日 08:00</span><span class="td" style="left:583px">宠物医院</span><span class="td" style="left:717px">兽医</span><span class="td" style="left:842px">常规体检</span><span class="td" style="left:975px">897.02</span><span class="td" style="left:1101px">2025年10月2日 08:03</span><span class="td" style="left:1372px">2025年10月2日 08:03</span></div>
<div class="tr" style="top:870px;background:#fff"><span class="cb" style="left:11px;top:8px"></span><span class="td pet" style="left:42px">欢欢 (爬行动物)</span><span class="td" style="left:312px">2025年7月2日 08:00</span><span class="td" style="left:583px">宠物医院</span><span class="td" style="left:717px">兽医</span><span class="td" style="left:842px">常规体检</span><span class="td" style="left:975px">555.42</span><span class="td" style="left:1101px">2025年10月2日 08:04</span><span class="td" style="left:1372px">2025年10月2日 08:04</span></div>
<div class="tr" style="top:902px;background:#f8f8f8"><span class="cb" style="left:11px;top:8px"></span><span class="td pet" style="left:42px">球球 (狗)</span><span class="td" style="left:312px">2025年6月22日 08:00</span><span class="td" style="left:583px">宠物医院</span><span class="td" style="left:717px">兽医</span><span class="td" style="left:842px">常规体检</span><span class="td" style="left:975px">351.69</span><span class="td" style="left:1101px">2025年10月2日 08:06</span><span class="td" style="left:1372px">2025年10月2日 08:06</span></div>

<!-- FOOTER / PAGINATION -->
<div class="abs" style="left:226px;top:934px;width:1636px;height:18px;background:#fff"></div>
<div class="pg" style="left:813px"></div>
<div class="pg" style="left:863px;background:#009688"></div>
<div class="pg" style="left:903px"></div>
<div class="pg" style="left:943px"></div>
<div class="pg" style="left:983px"></div>
<div class="pg" style="left:1023px"></div>
<div class="pg" style="left:1063px"></div>
<div class="pg" style="left:1103px"></div>
<div class="pg" style="left:1143px"></div>
<div class="pg" style="left:1193px"></div>
<div class="pg" style="left:1282px;width:45px;background:#fff;border:1px solid #ddd"></div>

<div class="abs" style="left:1681px;top:918px;font-family:'Liberation Serif',serif;font-style:italic;font-weight:bold;font-size:19px;letter-spacing:2.1px;-webkit-text-stroke:0.5px #e00000;color:#e00000;white-space:nowrap">www.java1234.com</div>
</body></html>
